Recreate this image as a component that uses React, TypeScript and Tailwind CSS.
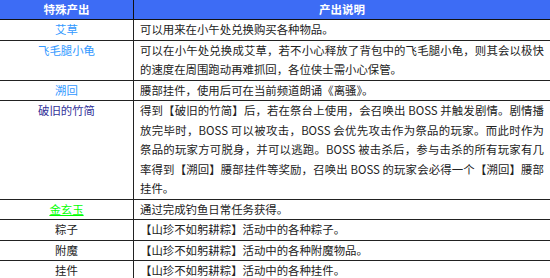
const rows: { name: string; color: string; underline?: boolean; lines: string[] }[] = [
  { name: "艾草", color: "text-[#3399ff]", lines: ["可以用来在小午处兑换购买各种物品。"] },
  {
    name: "飞毛腿小龟",
    color: "text-[#3399ff]",
    lines: [
      "可以在小午处兑换成艾草，若不小心释放了背包中的飞毛腿小龟，则其会以极快",
      "的速度在周围跑动再难抓回，各位侠士需小心保管。",
    ],
  },
  { name: "溯回", color: "text-[#3399ff]", lines: ["腰部挂件，使用后可在当前频道朗诵《离骚》。"] },
  {
    name: "破旧的竹简",
    color: "text-[#333399]",
    lines: [
      "得到【破旧的竹简】后，若在祭台上使用，会召唤出 BOSS 并触发剧情。剧情播",
      "放完毕时，BOSS 可以被攻击，BOSS 会优先攻击作为祭品的玩家。而此时作为",
      "祭品的玩家方可脱身，并可以逃跑。BOSS 被击杀后，参与击杀的所有玩家有几",
      "率得到【溯回】腰部挂件等奖励，召唤出 BOSS 的玩家会必得一个【溯回】腰部",
      "挂件。",
    ],
  },
  { name: "金玄玉", color: "text-[#00ff00]", underline: true, lines: ["通过完成钓鱼日常任务获得。"] },
  { name: "粽子", color: "text-[#222]", lines: ["【山珍不如躬耕粽】活动中的各种粽子。"] },
  { name: "附魔", color: "text-[#222]", lines: ["【山珍不如躬耕粽】活动中的各种附魔物品。"] },
  { name: "挂件", color: "text-[#222]", lines: ["【山珍不如躬耕粽】活动中的各种挂件。"] },
];

export default function App() {
  return (
    <div className="w-[550px] h-[278px] overflow-hidden bg-white font-['Noto_Sans_CJK_SC','Noto_Sans',sans-serif] text-[11.4px] leading-[19.5px] text-[#222]">
      <div className="grid grid-cols-[134px_1fr] bg-[#3d6cf5] text-white font-bold text-[11.5px] border-b border-[#111]">
        <div className="h-[19px] flex items-center justify-center border-r border-[#111]">特殊产出</div>
        <div className="h-[19px] flex items-center justify-center">产出说明</div>
      </div>
      {rows.map((r) => (
        <div key={r.name} className="grid grid-cols-[134px_1fr] border-b border-[#222]">
          <div className={`border-r border-[#222] text-center ${r.color} ${r.underline ? "underline" : ""}`}>
            {r.name}
          </div>
          <div className="pl-[6px] pr-[6px]">
            {r.lines.map((line, i) => (
              <div
                key={i}
                className={`whitespace-nowrap ${i < r.lines.length - 1 ? "text-justify [text-align-last:justify]" : ""}`}
              >
                {line}
              </div>
            ))}
          </div>
        </div>
      ))}
    </div>
  );
}
